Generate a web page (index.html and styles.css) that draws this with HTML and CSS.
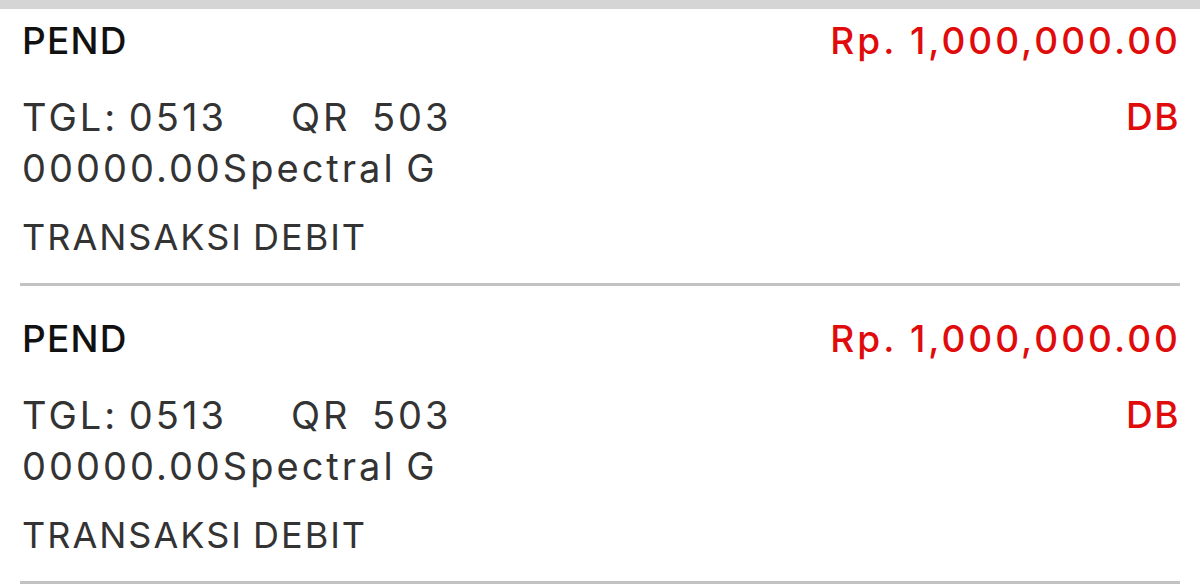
FILE: index.html
```html
<!DOCTYPE html>
<html lang="id">
<head>
<meta charset="utf-8">
<title>Mutasi</title>
<link rel="stylesheet" href="styles.css">
</head>
<body>
<div class="topband"></div>
<div class="list">
  <div class="item first">
    <div class="row head">
      <span class="status">PEND</span>
      <span class="amount">Rp. 1,000,000.00</span>
    </div>
    <div class="row detail">
      <span class="desc">TGL: 0513      QR  503
00000.00Spectral G</span>
      <span class="type">DB</span>
    </div>
    <div class="kind">TRANSAKSI DEBIT</div>
  </div>
  <div class="item">
    <div class="row head">
      <span class="status">PEND</span>
      <span class="amount">Rp. 1,000,000.00</span>
    </div>
    <div class="row detail">
      <span class="desc">TGL: 0513      QR  503
00000.00Spectral G</span>
      <span class="type">DB</span>
    </div>
    <div class="kind">TRANSAKSI DEBIT</div>
  </div>
</div>
</body>
</html>
```
FILE: styles.css
```css
html, body {
  margin: 0;
  padding: 0;
  background: #ffffff;
  height: 586px;
  overflow: hidden;
}
body {
  font-family: Inter, "Noto Sans", sans-serif;
}
.topband {
  height: 9px;
  background: #d5d5d5;
}
.list {
  padding: 0 20px;
}
.item {
  padding: 21px 0 21px;
  border-bottom: 3px solid #c2c2c2;
  display: flex;
  flex-direction: column;
}
.item.first {
  padding-top: 0;
}
.row {
  display: flex;
  justify-content: space-between;
  align-items: flex-start;
}
.head {
  height: 62px;
  align-items: center;
}
.status {
  font-size: 37px;
  font-weight: 500;
  color: #111111;
  letter-spacing: 1.2px;
  padding-left: 2px;
}
.amount {
  font-size: 37px;
  font-weight: 500;
  color: #e00b0b;
  letter-spacing: 3px;
  margin-right: -1px;
}
.detail {
  margin-top: 21px;
}
.desc {
  white-space: pre;
  font-size: 38px;
  line-height: 51px;
  color: #333333;
  letter-spacing: 3px;
  word-spacing: -3px;
  padding-left: 2px;
}
.type {
  font-size: 37px;
  line-height: 50px;
  font-weight: 500;
  color: #e00b0b;
  letter-spacing: 1.5px;
}
.kind {
  margin-top: 18px;
  font-size: 36px;
  line-height: 50px;
  color: #333333;
  letter-spacing: 2px;
  word-spacing: -2px;
  padding-left: 2px;
}
```
